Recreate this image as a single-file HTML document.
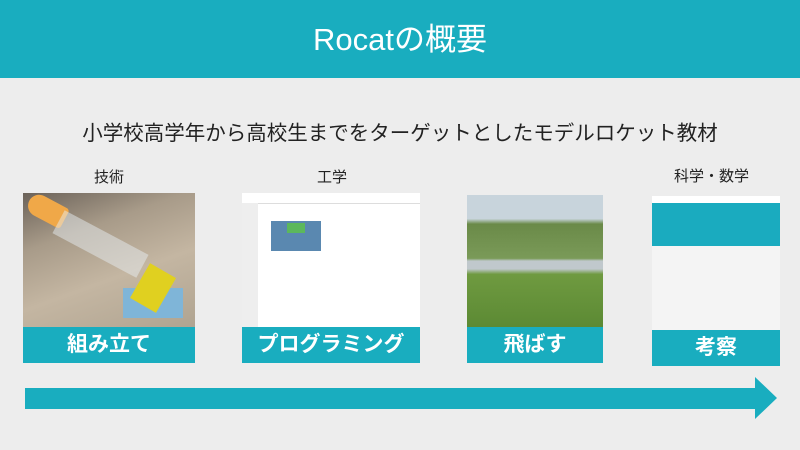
<!DOCTYPE html>
<html><head><meta charset="utf-8"><style>
body{margin:0;width:800px;height:450px;background:#ededed;position:relative;overflow:hidden;font-family:"Liberation Sans","Noto Sans CJK JP",sans-serif}
.hd{position:absolute;left:0;top:0;width:800px;height:78px;background:#19adbf;color:#fff;font-size:31px;text-align:center;line-height:80px}
.sub{position:absolute;left:0;width:800px;top:116px;text-align:center;font-size:20.5px;color:#222}
.lb{position:absolute;font-size:15px;color:#222}
.img{position:absolute}
.bar{position:absolute;background:#19adbf;color:#fff;font-weight:bold;font-size:21px;text-align:center;line-height:36px;height:36px}
</style></head><body>
<div class="hd">Rocatの概要</div>
<div class="sub">小学校高学年から高校生までをターゲットとしたモデルロケット教材</div>
<div class="lb" style="left:94px;top:166px">技術</div>
<div class="lb" style="left:317px;top:166px">工学</div>
<div class="lb" style="left:674px;top:165px">科学・数学</div>

<div class="img" style="left:23px;top:193px;width:172px;height:134px;background:linear-gradient(160deg,#6b6259 0%,#a89b89 30%,#c4b6a2 60%,#b0a491 100%)">
<div style="position:absolute;left:4px;top:6px;width:40px;height:22px;background:#f0a848;border-radius:20px 6px 6px 20px;transform:rotate(28deg)"></div>
<div style="position:absolute;left:30px;top:38px;width:95px;height:26px;background:rgba(230,235,240,.5);transform:rotate(28deg)"></div>
<div style="position:absolute;left:100px;top:95px;width:60px;height:30px;background:#7fb5d8"></div>
<div style="position:absolute;left:115px;top:75px;width:30px;height:40px;background:#e0d020;transform:rotate(30deg)"></div>
</div>
<div class="bar" style="left:23px;top:327px;width:172px">組み立て</div>

<div class="img" style="left:242px;top:193px;width:178px;height:134px;background:#fff">
<div style="height:10px;border-bottom:1px solid #ddd"></div>
<div style="position:absolute;left:0;top:10px;width:16px;height:124px;background:#eee"></div>
<div style="position:absolute;left:29px;top:28px;width:50px;height:30px;background:#5a88b0"></div>
<div style="position:absolute;left:45px;top:30px;width:18px;height:10px;background:#5cb85c"></div>
</div>
<div class="bar" style="left:242px;top:327px;width:178px">プログラミング</div>

<div class="img" style="left:467px;top:195px;width:136px;height:132px;background:linear-gradient(#c8d4dc 0%,#c8d4dc 18%,#6a8a48 22%,#7a9a58 48%,#c0c8cc 50%,#c0c8cc 56%,#6f9a40 60%,#5c8a34 100%)"></div>
<div class="bar" style="left:467px;top:327px;width:136px">飛ばす</div>

<div class="img" style="left:652px;top:196px;width:128px;height:134px;background:#f4f4f4">
<div style="height:7px;background:#fff"></div>
<div style="height:43px;background:#1aabbf"></div>
</div>
<div class="bar" style="left:652px;top:330px;width:128px">考察</div>

<svg style="position:absolute;left:0;top:0" width="800" height="450">
<polygon points="25,388 755,388 755,377 777,398 755,419 755,409 25,409" fill="#19adbf"/>
</svg>
</body></html>
